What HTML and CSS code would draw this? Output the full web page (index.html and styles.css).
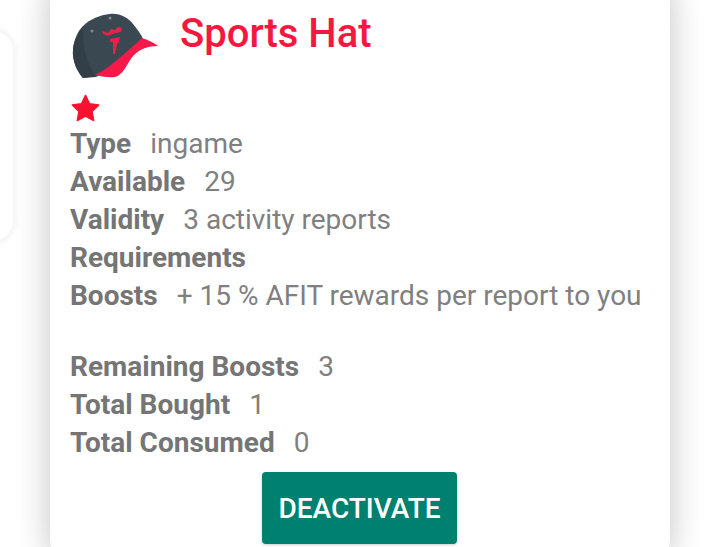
FILE: index.html
```html
<!DOCTYPE html>
<html lang="en">
<head>
    <meta charset="UTF-8">
    <title>Sports Hat</title>
    <link rel="stylesheet" href="styles.css">
</head>
<body>
    <div class="carousel">
        <div class="side-card"></div>
        <div class="card">
            <div class="card-head">
                <svg class="hat" viewBox="0 0 90 70" width="90" height="70">
                    <path d="M11 65 C5 58 0 48 1 36 C2 26 6 18 11 13 C18 6 28 2 38 1 C48 0 56 5 61 11 C65 16 69 21 71 26 L50 50 L24 64 Z" fill="#3a4851"/>
                    <path d="M11 65 C5 58 0 48 1 36 C2 28 6 20 11 15 C10 32 14 50 24 63 Z" fill="#323f48"/>
                    <path d="M23 62 C34 57 47 46 70 25 C77 27 82 30 86 33 C76 33 68 36 62 42 C56 48 52 62 43 64 C36 65 28 63 23 62 Z" fill="#f7194a"/>
                    <path d="M30 18 L36 20 L39 16 L43 17 L46 14 L50 15 L49 19 L44 20 L40 21 L36 23 L31 21 Z" fill="#e8204a"/>
                    <path d="M38 26 L48 24 L47 29 L45 31 L43 41 L41 41 L41 29 L38 29 Z" fill="#e8204a"/>
                    <circle cx="20" cy="18" r="1.5" fill="#7d8a93"/>
                    <circle cx="38" cy="5" r="1.5" fill="#7d8a93"/>
                </svg>
                <h1 class="title">Sports Hat</h1>
            </div>
            <svg class="star" viewBox="0 0 30 28" width="29" height="28">
                <path d="M15 1 L19.2 9.6 L28.7 10.9 L21.8 17.5 L23.5 27 L15 22.4 L6.5 27 L8.2 17.5 L1.3 10.9 L10.8 9.6 Z" fill="#f7132f" stroke="#f7132f" stroke-width="1.5" stroke-linejoin="round"/>
            </svg>
            <div class="rows">
                <div class="row"><b>Type</b><span>ingame</span></div>
                <div class="row"><b>Available</b><span>29</span></div>
                <div class="row"><b>Validity</b><span>3 activity reports</span></div>
                <div class="row"><b>Requirements</b></div>
                <div class="row"><b>Boosts</b><span>+ 15 % AFIT rewards per report to you</span></div>
            </div>
            <div class="rows stats">
                <div class="row"><b>Remaining Boosts</b><span>3</span></div>
                <div class="row"><b>Total Bought</b><span>1</span></div>
                <div class="row"><b>Total Consumed</b><span>0</span></div>
            </div>
            <div class="button-container">
                <button class="action">DEACTIVATE</button>
            </div>
        </div>
    </div>
</body>
</html>
```

FILE: styles.css
```css
html, body {
    height: 100%;
}
body {
    margin: 0;
    overflow: hidden;
    background-color: #fff;
    font-family: Roboto, "Liberation Sans", sans-serif;
}
.carousel {
    display: flex;
    align-items: flex-start;
    gap: 37px;
    margin-left: -100px;
    width: 820px;
    height: 547px;
}
.side-card {
    flex: none;
    width: 113px;
    height: 210px;
    margin-top: 31px;
    background-color: #fff;
    border-radius: 20px;
    box-shadow: 0 0 8px rgba(0, 0, 0, 0.1);
}
.card {
    flex: none;
    box-sizing: border-box;
    width: 620px;
    height: 580px;
    margin-top: -20px;
    padding: 33px 21px 0 20px;
    background-color: #fff;
    border-radius: 20px;
    box-shadow: 0 0 34px rgba(0, 0, 0, 0.24);
}
.card-head {
    display: flex;
    align-items: flex-start;
    height: 70px;
}
.hat {
    flex: none;
    margin-left: 2px;
}
.title {
    margin: 0 0 0 18px;
    color: #f7173f;
    font-size: 40px;
    font-weight: 500;
    line-height: 42px;
}
.star {
    display: block;
    margin: 11px 0 3px 1px;
}
.rows {
    font-size: 28px;
    line-height: 38px;
    color: #808080;
}
.stats {
    margin-top: 33px;
}
.row {
    white-space: nowrap;
}
.row b {
    color: #757575;
    font-weight: 700;
    margin-right: 19px;
}
.button-container {
    display: flex;
    justify-content: center;
    margin-top: 10px;
}
.action {
    width: 195px;
    height: 72px;
    padding: 0;
    border: none;
    border-radius: 4px;
    background-color: #00806e;
    color: #fff;
    font-family: inherit;
    font-size: 28px;
    font-weight: 500;
    box-shadow: 0 1px 3px rgba(0, 0, 0, 0.2);
}
```
